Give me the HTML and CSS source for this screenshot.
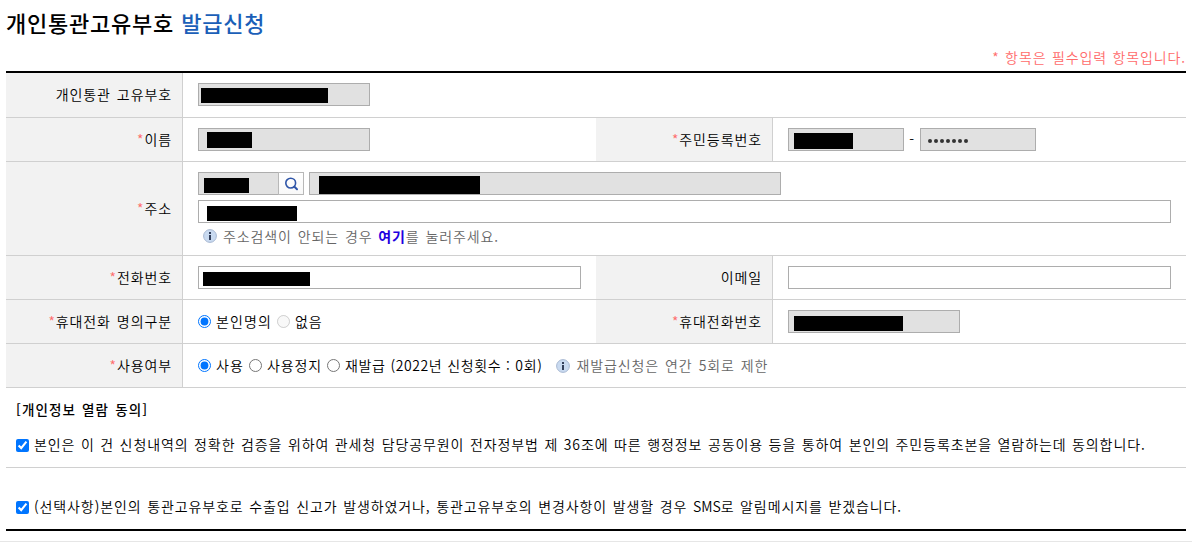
FILE: index.html
```html
<!DOCTYPE html>
<html lang="ko">
<head>
<meta charset="utf-8">
<title>개인통관고유부호 발급신청</title>
<link rel="stylesheet" href="styles.css">
</head>
<body>
<main class="page">
  <h1 class="title"><span>개인통관고유부호</span> <span class="accent">발급신청</span></h1>
  <p class="required-note"><span>* 항목은 필수입력 항목입니다.</span></p>
  <form class="form">
    <div class="row row-first">
      <div class="label"><span>개인통관 고유부호</span></div>
      <div class="cell"><div class="field locked w-code"><i class="mask mask-code"></i></div></div>
    </div>
    <div class="row split">
      <div class="label"><b>*</b><span>이름</span></div>
      <div class="cell"><div class="field locked w-code"><i class="mask mask-name"></i></div></div>
      <div class="label"><b>*</b><span>주민등록번호</span></div>
      <div class="cell"><div class="field locked w-id"><i class="mask mask-id"></i></div><span class="dash">-</span><div class="field locked w-id"><span class="dots"><i></i><i></i><i></i><i></i><i></i><i></i><i></i></span></div></div>
    </div>
    <div class="row row-address">
      <div class="label"><b>*</b><span>주소</span></div>
      <div class="cell address">
        <div class="line">
          <div class="field locked w-zip"><i class="mask mask-zip"></i></div>
          <button class="search" type="button" aria-label="검색"><svg width="14" height="14" viewBox="0 0 14 14"><circle cx="5.7" cy="6.1" r="4.9" fill="none" stroke="#2f55a8" stroke-width="1.6"/><path d="M9.2 9.6 12 12.2" stroke="#2f55a8" stroke-width="2" stroke-linecap="round"/></svg></button>
          <div class="field locked w-addr"><i class="mask mask-addr"></i></div>
        </div>
        <div class="field w-full"><i class="mask mask-detail"></i></div>
        <div class="hint"><svg class="info" width="14" height="14" viewBox="0 0 14 14"><circle cx="7" cy="7" r="6.4" fill="#c9daf0" stroke="#a9b9d2"/><path d="M6 3h2v2H6zM6 6h2v5H6z" fill="#34415c"/></svg><span class="hint-address">주소검색이 안되는 경우 <a href="#">여기</a>를 눌러주세요.</span></div>
      </div>
    </div>
    <div class="row split">
      <div class="label"><b>*</b><span>전화번호</span></div>
      <div class="cell"><div class="field w-half"><i class="mask mask-tel"></i></div></div>
      <div class="label"><span>이메일</span></div>
      <div class="cell"><div class="field w-half"></div></div>
    </div>
    <div class="row split">
      <div class="label"><b>*</b><span>휴대전화 명의구분</span></div>
      <div class="cell choices"><label><input type="radio" name="owner" checked><span>본인명의</span></label><label><input type="radio" name="owner" disabled><span>없음</span></label></div>
      <div class="label"><b>*</b><span>휴대전화번호</span></div>
      <div class="cell"><div class="field locked w-code"><i class="mask mask-mobile"></i></div></div>
    </div>
    <div class="row">
      <div class="label"><b>*</b><span>사용여부</span></div>
      <div class="cell choices"><label><input type="radio" name="use" checked><span>사용</span></label><label><input type="radio" name="use"><span>사용정지</span></label><label><input type="radio" name="use"><span class="reissue">재발급 (2022년 신청횟수 : 0회)</span></label>
        <div class="hint limit"><svg class="info" width="14" height="14" viewBox="0 0 14 14"><circle cx="7" cy="7" r="6.4" fill="#c9daf0" stroke="#a9b9d2"/><path d="M6 3h2v2H6zM6 6h2v5H6z" fill="#34415c"/></svg><span>재발급신청은 연간 5회로 제한</span></div>
      </div>
    </div>
    <section class="consent">
      <h2>[개인정보 열람 동의]</h2>
      <label><input type="checkbox" checked><span class="agree">본인은 이 건 신청내역의 정확한 검증을 위하여 관세청 담당공무원이 전자정부법 제 36조에 따른 행정정보 공동이용 등을 통하여 본인의 주민등록초본을 열람하는데 동의합니다.</span></label>
    </section>
    <section class="optional">
      <label><input type="checkbox" checked><span class="sms">(선택사항)본인의 통관고유부호로 수출입 신고가 발생하였거나, 통관고유부호의 변경사항이 발생할 경우 <span class="latin">SMS</span>로 알림메시지를 받겠습니다.</span></label>
    </section>
  </form>
</main>
</body>
</html>
```

FILE: styles.css
```css
* { box-sizing: border-box; }
body {
  margin: 0;
  background: #fff;
  color: #000;
  font: 350 14px/20px "Noto Sans CJK KR", sans-serif;
  letter-spacing: 0.9px;
  word-spacing: 1.2px;
  white-space: nowrap;
}
.page { height: 542px; padding: 0 6px; border-bottom: 1px solid #e6e6e6; overflow: hidden; }
.title { margin: 0; padding-top: 7px; height: 47px; font-size: 22px; line-height: 30px; font-weight: 500; letter-spacing: 0.75px; word-spacing: 0.5px; }
.accent { color: #1b5fb8; }
.required-note { margin: 0; height: 24px; text-align: right; color: #ff6b6b; word-spacing: 0.6px; }
.form { border-top: 2px solid #000; border-bottom: 2px solid #000; }
.row { display: grid; grid-template-columns: 177px 1fr; height: 44px; border-bottom: 1px solid #d0d0d0; }
.row-first { height: 45px; }
.row-address { height: 94px; }
.split { grid-template-columns: 177px 413px 177px 1fr; }
.label { display: flex; align-items: center; justify-content: flex-end; padding: 0 10px 1px 0; background: #f2f2f2; border-right: 1px solid #d0d0d0; }
.row-first .label { padding-bottom: 3px; }
.label b { color: #ff6b6b; font-weight: 350; }
.cell { display: flex; align-items: flex-start; padding: 10px 15px 0; }
.field { display: flex; align-items: flex-start; height: 23px; border: 1px solid #adadad; background: #fff; }
.locked { background: #e1e1e1; }
.w-code { width: 172px; }
.w-id { width: 116px; }
.w-zip { width: 81px; }
.w-addr { width: 472px; margin-left: 5px; }
.w-full { width: 973px; }
.w-half { width: 383px; }
.mask { height: 15px; background: #000; }
.mask-code { width: 127px; margin: 4px 0 0 2px; }
.mask-name { width: 45px; height: 16px; margin: 3px 0 0 8px; }
.mask-id { width: 59px; height: 16px; margin: 4px 0 0 5px; }
.mask-zip { width: 45px; margin: 5px 0 0 5px; }
.mask-addr { width: 161px; height: 18px; margin: 3px 0 0 9px; }
.mask-detail { width: 90px; margin: 5px 0 0 8px; }
.mask-tel { width: 107px; height: 14px; margin: 5px 0 0 4px; }
.mask-mobile { width: 109px; margin: 5px 0 0 5px; }
.dash { width: 16px; padding-top: 1px; text-align: center; }
.dots { display: flex; gap: 2px; padding: 10px 0 0 7px; }
.dots i { width: 4px; height: 4px; border-radius: 50%; background: #333; }
.address { flex-direction: column; gap: 5px; }
.line { display: flex; }
.search { display: flex; width: 26px; height: 23px; padding: 4px 0 0 6px; margin-left: -1px; border: 1px solid #b8b8b8; background: linear-gradient(#fff, #f8f8f8); }
.hint { display: flex; align-items: center; gap: 6px; height: 20px; color: #666; }
.address .hint { padding-left: 5px; margin-top: -2px; word-spacing: 1px; }
.hint a { color: #2100e0; font-weight: 700; text-decoration: none; }
.info { flex: none; }
.choices { align-items: center; padding-top: 0; gap: 5px; }
.choices span { padding-bottom: 2px; }
.choices label:first-child span { letter-spacing: 1.1px; }
label { display: flex; align-items: center; gap: 5px; }
input { width: 13px; height: 13px; margin: 0; flex: none; }
.choices .reissue { letter-spacing: 0.6px; word-spacing: 0.4px; }
.limit { margin-left: 9px; }
.consent { height: 80px; padding: 11px 10px 0; border-bottom: 1px solid #d0d0d0; }
.consent h2 { margin: 0 0 15px; font-size: 13.5px; line-height: 20px; font-weight: 500; letter-spacing: 1.1px; }
.optional { height: 61px; padding: 28px 10px 0; }
.consent input, .optional input { margin-top: 2px; }
.agree { word-spacing: 0.75px; }
.sms { word-spacing: 0.8px; }
.latin { letter-spacing: 0; }
```
